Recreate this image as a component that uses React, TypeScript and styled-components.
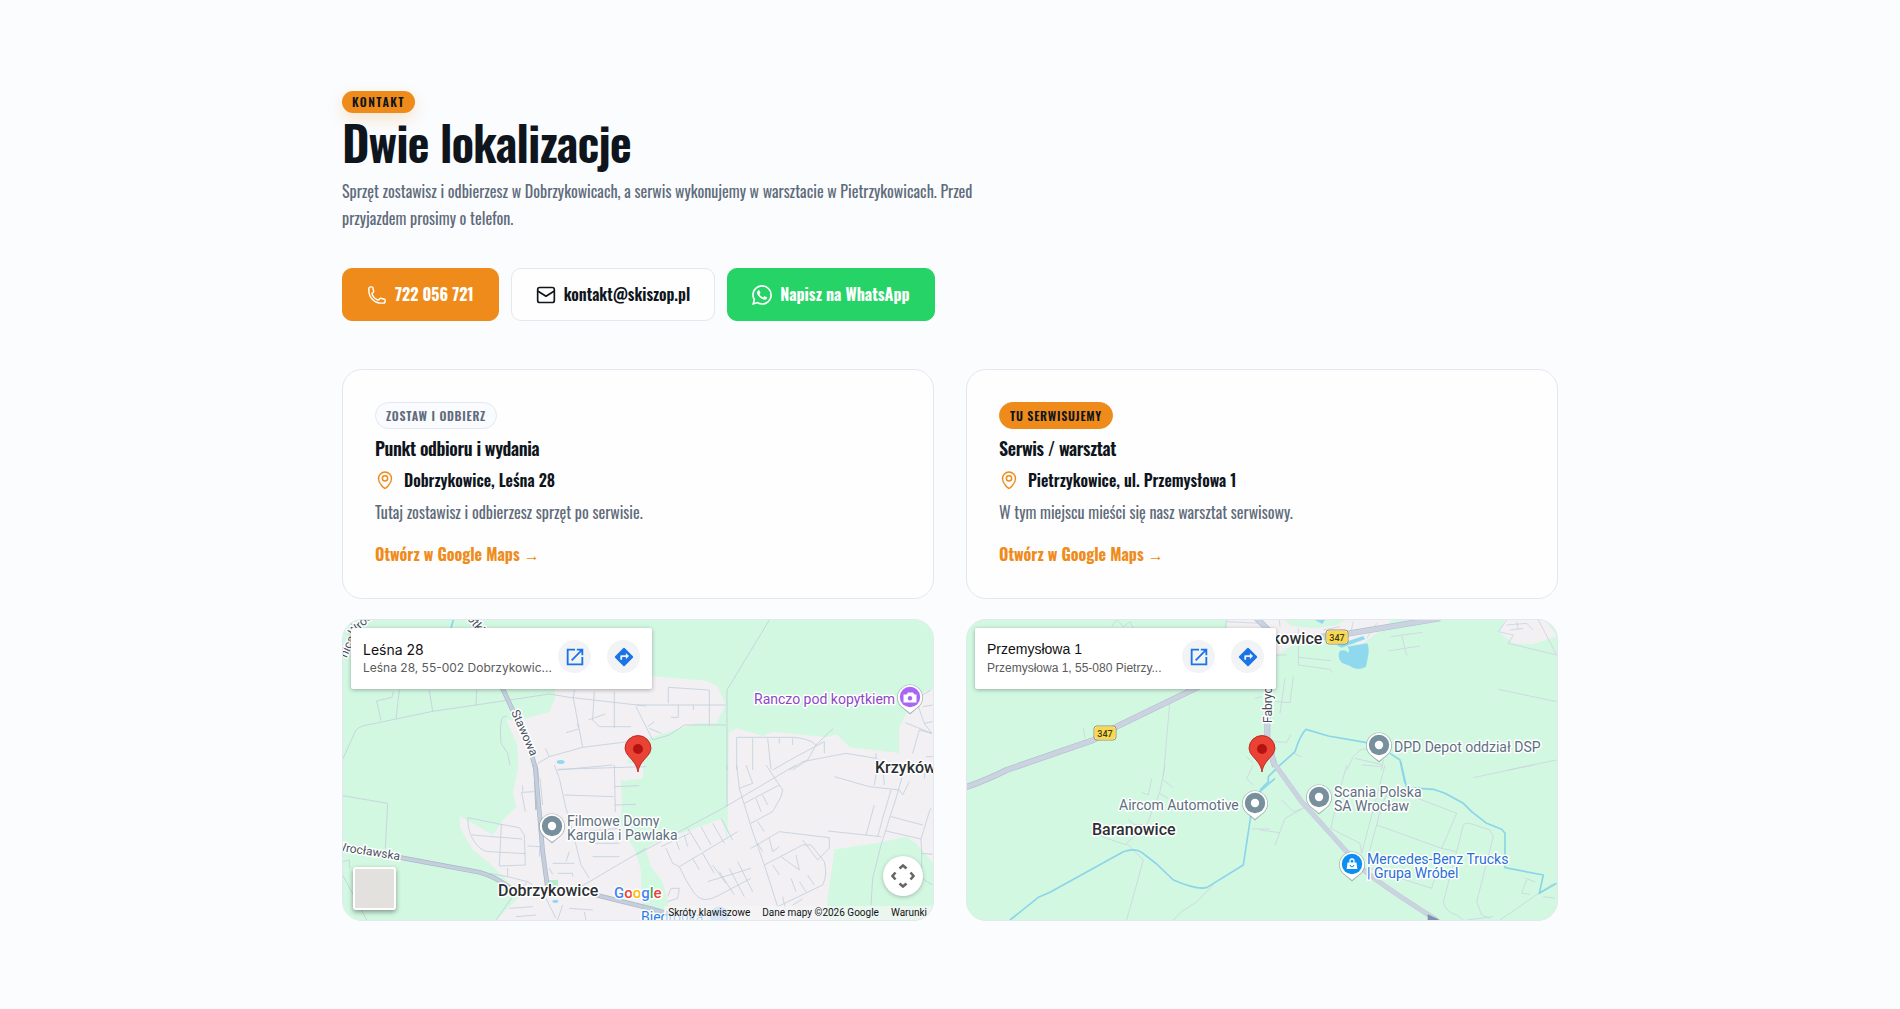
import React from "react";
import styled, { createGlobalStyle, css } from "styled-components";
import { SiWhatsapp } from "react-icons/si";

const colors = {
  page: "#fafcfe",
  ink: "#0f151c",
  muted: "#5f6b7a",
  line: "#e2e8ee",
  accent: "#ef8b1b",
  whatsapp: "#25d366",
};

const GlobalStyle = createGlobalStyle`
  *, *::before, *::after { box-sizing: border-box; }
  body {
    margin: 0;
    background: ${colors.page};
    color: ${colors.ink};
    font-family: Oswald, "Roboto Condensed", sans-serif;
    font-size: 16px;
  }
  h1, h2, p { margin: 0; }
  h1, h2 { font-weight: 600; letter-spacing: -0.02em; }
`;

/* ---------- page parts ---------- */

const Section = styled.section`
  max-width: 1280px;
  margin: 0 auto;
  padding: 91px 32px 88px;
`;

const Header = styled.header`
  display: flex;
  flex-direction: column;
  align-items: flex-start;
  max-width: 640px;
`;

const Eyebrow = styled.span`
  padding: 0 10px;
  border-radius: 11px;
  background: ${colors.accent};
  box-shadow: 0 6px 16px rgba(239, 139, 27, 0.22);
  font-size: 12px;
  font-weight: 600;
  line-height: 22px;
  letter-spacing: 0.12em;
  text-transform: uppercase;
`;

const Title = styled.h1`
  margin-top: 1px;
  font-size: 48px;
  line-height: 56px;
`;

const Lead = styled.p`
  margin-top: 8px;
  color: ${colors.muted};
  line-height: 27px;
`;

const Actions = styled.div`
  display: flex;
  flex-wrap: wrap;
  gap: 12px;
  margin-top: 36px;
`;

const variants = {
  primary: css`
    background: ${colors.accent};
    border-color: ${colors.accent};
    color: #fff;
    font-weight: 700;
  `,
  plain: css`
    background: #fefefe;
    border-color: ${colors.line};
    color: ${colors.ink};
    font-weight: 600;
  `,
  whatsapp: css`
    background: ${colors.whatsapp};
    border-color: ${colors.whatsapp};
    color: #fff;
    font-weight: 700;
  `,
};

const ActionLink = styled.a<{ $variant: keyof typeof variants }>`
  display: inline-flex;
  align-items: center;
  gap: 8px;
  padding: 13px 24px;
  border: 1px solid;
  border-radius: 10px;
  line-height: 25px;
  text-decoration: none;
  ${(p) => variants[p.$variant]}

  svg { flex: none; width: 20px; height: 20px; }
`;

const Columns = styled.div`
  display: grid;
  grid-template-columns: repeat(auto-fit, minmax(360px, 1fr));
  gap: 32px;
  margin-top: 48px;
`;

const Place = styled.article`
  display: flex;
  flex-direction: column;
  gap: 20px;
  min-width: 0;
`;

const Card = styled.div`
  display: flex;
  flex-direction: column;
  align-items: flex-start;
  padding: 32px;
  border: 1px solid ${colors.line};
  border-radius: 20px;
  background: #fefefe;
`;

const Tag = styled.span<{ $filled?: boolean }>`
  padding: 0 10px;
  border: 1px solid ${(p) => (p.$filled ? colors.accent : colors.line)};
  border-radius: 14px;
  background: ${(p) => (p.$filled ? colors.accent : "#f9fbfe")};
  color: ${(p) => (p.$filled ? colors.ink : colors.muted)};
  font-size: 12px;
  font-weight: 600;
  line-height: 25px;
  letter-spacing: 0.06em;
  text-transform: uppercase;
`;

const CardTitle = styled.h2`
  margin-top: 6px;
  font-size: 18px;
  line-height: 26px;
`;

const Address = styled.p`
  display: flex;
  align-items: center;
  gap: 9px;
  margin-top: 6px;
  font-weight: 600;
  line-height: 26px;

  svg { width: 20px; height: 20px; color: ${colors.accent}; }
`;

const Note = styled.p`
  margin-top: 6px;
  color: ${colors.muted};
  line-height: 27px;
`;

const MapsLink = styled.a`
  margin-top: 16px;
  color: ${colors.accent};
  font-weight: 700;
  line-height: 24px;
  text-decoration: none;
`;

/* ---------- map parts ---------- */

const MapFrame = styled.div`
  position: relative;
  height: 302px;
  border: 1px solid ${colors.line};
  border-radius: 20px;
  overflow: hidden;
  background: #d3f8e2;
  font-family: Roboto, "Liberation Sans", sans-serif;
`;

const MapCanvas = styled.svg`
  display: block;
  width: 100%;
  height: 100%;

  .road { fill: none; stroke: #c3cfdd; stroke-width: 2.5; }
  .street { fill: none; stroke: #ccd4e0; stroke-width: 2.5; }
  .casing { fill: none; stroke: #a9b6c8; stroke-width: 14; }
  .highway { fill: none; stroke: #c5cedc; stroke-width: 10; }
  .wideCasing { fill: none; stroke: #b4bed0; stroke-width: 18; }
  .wide { fill: none; stroke: #cbd3e0; stroke-width: 14; }
  .river { fill: none; stroke: #8bd5e9; stroke-width: 5; stroke-linejoin: round; }
  .water { fill: #8fd8ee; }
  .land { fill: #f2f0f2; }
  .green { fill: #d3f8e2; }
`;

const MapText = styled.text<{ $size?: number; $weight?: number }>`
  fill: ${(p) => p.fill ?? "#5d7080"};
  font-size: ${(p) => p.$size ?? 14}px;
  font-weight: ${(p) => p.$weight ?? 400};
  paint-order: stroke;
  stroke: #fff;
  stroke-width: 3px;
  stroke-linejoin: round;
`;

const InfoBox = styled.div`
  position: absolute;
  top: 8px;
  left: 8px;
  display: flex;
  align-items: flex-start;
  gap: 16px;
  width: 301px;
  height: 61px;
  padding: 12px 12px 0;
  border-radius: 2px;
  background: #fff;
  box-shadow: 0 1px 4px rgba(0, 0, 0, 0.3);
`;

const InfoText = styled.div<{ $arial?: boolean }>`
  flex: 1;
  min-width: 0;
  font-family: ${(p) => (p.$arial ? '"Liberation Sans", sans-serif' : 'Inter, Roboto, sans-serif')};
`;

const InfoName = styled.div`
  color: #111;
  font-size: 14px;
  line-height: 19px;
`;

const InfoAddress = styled.div`
  color: #5b5b5b;
  font-size: 12px;
  line-height: 18px;
  white-space: nowrap;
`;

const RoundLink = styled.a`
  display: grid;
  flex: none;
  place-items: center;
  width: 33px;
  height: 33px;
  border-radius: 50%;
  background: #f1f3f4;

  svg { width: 22px; height: 22px; }
`;

const LayerButton = styled.button`
  position: absolute;
  left: 10px;
  bottom: 10px;
  width: 43px;
  height: 43px;
  padding: 0;
  border: 2px solid #fff;
  border-radius: 3px;
  background: #e3e1de;
  box-shadow: 0 2px 5px rgba(0, 0, 0, 0.4);
`;

const CameraButton = styled.button`
  position: absolute;
  right: 10px;
  bottom: 24px;
  display: grid;
  place-items: center;
  width: 40px;
  height: 40px;
  padding: 0;
  border: 0;
  border-radius: 50%;
  background: #fff;
  box-shadow: 0 1px 4px rgba(0, 0, 0, 0.25);
`;

const Legal = styled.div`
  position: absolute;
  right: 0;
  bottom: 0;
  display: flex;
  gap: 12px;
  padding: 0 6px 0 4px;
  background: rgba(245, 245, 245, 0.7);
  font-size: 10px;
  line-height: 14px;

  a, button {
    padding: 0;
    border: 0;
    background: none;
    color: #111;
    font: inherit;
    text-decoration: none;
  }
`;

/* ---------- icons ---------- */

const lineIcon = {
  viewBox: "0 0 24 24",
  fill: "none",
  stroke: "currentColor",
  strokeLinecap: "round",
  strokeLinejoin: "round",
  "aria-hidden": true,
} as const;

const PhoneIcon = () => (
  <svg {...lineIcon} strokeWidth={1.7}>
    <path d="M2.25 6.75c0 8.284 6.716 15 15 15h2.25a2.25 2.25 0 0 0 2.25-2.25v-1.372c0-.516-.351-.966-.852-1.091l-4.423-1.106c-.44-.11-.902.055-1.173.417l-.97 1.293c-.282.376-.769.542-1.21.38a12.035 12.035 0 0 1-7.143-7.143c-.162-.441.004-.928.38-1.21l1.293-.97c.363-.271.527-.734.417-1.173L6.963 3.102a1.125 1.125 0 0 0-1.091-.852H4.5A2.25 2.25 0 0 0 2.25 4.5v2.25Z" />
  </svg>
);

const MailIcon = () => (
  <svg {...lineIcon} strokeWidth={2}>
    <rect x="2" y="3" width="20" height="18" rx="2.5" />
    <path d="m2.5 7.5 9.5 6 9.5-6" />
  </svg>
);

const PinIcon = () => (
  <svg {...lineIcon} strokeWidth={1.8}>
    <circle cx="12" cy="10" r="3.2" />
    <path d="M19.8 10.2C19.8 17 12 22.2 12 22.2S4.2 17 4.2 10.2a7.8 7.8 0 0 1 15.6 0Z" />
  </svg>
);

const OpenIcon = () => (
  <svg viewBox="0 0 24 24" fill="#1a73e8" aria-hidden>
    <path d="M19 19H5V5h7V3H3v18h18v-9h-2v7zM14 3v2h3.6l-9.9 9.9 1.4 1.4L19 6.400V10h2V3h-7z" />
  </svg>
);

const DirectionsIcon = () => (
  <svg viewBox="0 0 24 24" fill="#1a73e8" aria-hidden>
    <path d="M21.700 11.300l-9-9a1 1 0 0 0-1.400 0l-9 9a1 1 0 0 0 0 1.400l9 9a1 1 0 0 0 1.400 0l9-9a1 1 0 0 0 0-1.400zM14 14.500V12h-4v3H8v-4a1 1 0 0 1 1-1h5V7.500l3.500 3.500-3.500 3.500z" />
  </svg>
);

const CameraIcon = () => (
  <svg width="24" height="24" viewBox="0 0 24 24" fill="none" stroke="#666" strokeWidth="2.600" aria-hidden>
    <path d="M8.500 4.500 12 1.500l3.500 3M8.500 19.500l3.500 3 3.500-3M4.500 8.500l-3 3.500 3 3.500M19.500 8.500l3 3.500-3 3.500" />
  </svg>
);

const RedPin = ({ x, y }: { x: number; y: number }) => (
  <g transform={`translate(${x} ${y})`}>
    <path
      d="M0 0C-1-7-5-11-9-15.500A13 13 0 0 1-13-23.500 13 13 0 0 1 13-23.500 13 13 0 0 1 9-15.500C5-11 1-7 0 0Z"
      fill="#ea4335"
      stroke="#b31412"
      strokeWidth="0.800"
    />
    <circle cy="-23" r="5" fill="#b31412" />
  </g>
);

const PoiPin = ({ x, y, color = "#78909c", children }: { x: number; y: number; color?: string; children?: React.ReactNode }) => (
  <g transform={`translate(${x} ${y})`}>
    <path d="M0 17.500-7 11.500a13 13 0 1 1 14 0Z" fill="#5b6670" opacity="0.450" />
    <path d="M0 16-7 10.500a12.300 12.300 0 1 1 14 0Z" fill="#fff" />
    <circle r="10.200" fill={color} />
    {children ?? <circle r="4.200" fill="#fff" />}
  </g>
);

const RoadShield = ({ x, y }: { x: number; y: number }) => (
  <g transform={`translate(${x} ${y})`}>
    <rect x="-11" y="-7" width="22" height="14" rx="3" fill="#fff" stroke="#8b7a2b" strokeWidth="0.800" />
    <rect x="-10" y="-6" width="20" height="12" rx="2" fill="#fbd84a" />
    <text y="3.500" textAnchor="middle" fontSize="9" fontWeight="500" fill="#3c3a20">347</text>
  </g>
);

/* ---------- map drawings, one group per tile ---------- */

const TL = "translate(-21 -30)";
const TR = "translate(879 -30)";
const BL = "translate(-21 435)";
const BR = "translate(879 435)";

const DobrzykowiceMap = () => (
  <MapCanvas viewBox="0 0 590 300" preserveAspectRatio="xMidYMid slice" role="img" aria-label="Mapa: Leśna 28, Dobrzykowice">
    <g transform="scale(0.33333)">
      <rect className="land" width="1770" height="900" />
      <path className="green" d="M0 0H1770V208L1745 215 1690 280 1668 325V399L1520 382 1480 343 1450 352 1290 335 1260 348 1180 325 1158 340 1153 660 1135 590 1000 645 905 680 925 740 960 790 975 850 960 900H895V760L880 700 833 610 840 500 860 385 905 360 930 350 1060 310 1120 310 1148 255 1125 200 1090 182 920 168H640L635 235 620 275 545 296 490 300 522 372 526 440 510 520 520 560 480 600 450 645 350 588 352 625 390 690 440 730 490 780 525 815 530 830 460 900H0Z" />
      <path className="green" d="M833 480 905 468 1153 450V590L1000 645 930 672 905 690 870 650 840 600Z" />
      <path className="land" d="M820 430h80v45l-60 8-30-20Z" />
      <path className="green" d="M1475 688 1600 670 1690 650 1720 670 1770 730V900H1447L1460 790Z" />
      <path d="M610 780h35v18l-28 14Z" fill="#b7ead0" />
      <g transform={TL}>
        <path className="road" d="M20 448 60 360Q75 345 110 342L180 327 290 304 420 285 640 252 700 262 930 288M180 327 190 240M290 304 280 240M420 285 422 240M135 332 122 273 168 262 172 245M500 322 512 318M500 322Q490 340 495 400L515 430 522 465M740 412 712 265 715 240M605 460 640 440 740 412 900 392M640 440 628 415M690 368 728 357M728 355 724 340M775 245 770 330 790 350 885 350M835 355V245M757 330 808 312M665 478 930 470" />
        <path className="river" d="M345 54 352 30M40 40l20 8" />
        <path className="casing" d="M497 230 530 300 580 410 600 480 605 600" />
        <path className="highway" d="M497 230 530 300 580 410 600 480 605 600" />
        <ellipse className="water" cx="674" cy="456" rx="12" ry="6" />
      </g>
      <g transform={TR}>
        <path className="road" d="M400 30 273 240V480M0 285H270M97 280V232L218 240M220 345V240M127 285V322H105M172 300V285M0 290 50 390 100 375 145 345H270M40 355 75 370M35 350 55 335M302 480V382H470Q520 385 540 405L592 355M350 480V385M395 385 405 478M430 400V385M470 385V405M540 405 515 450 470 480M410 480 480 440 565 395V430M460 480 500 455 630 430 720 445 780 480M720 445V430M808 338 887 370 865 340 840 270M887 370 850 360 830 430M860 290 890 285M865 340 890 335M860 255 885 240M870 440h20" />
      </g>
      <g transform={BL}>
        <path className="road" d="M20 92 155 115 148 250M665 15 830 0M685 90 833 95M595 80 557 82 568 140M560 80V62M655 0 670 40 690 130 710 200 735 300 760 340M20 330 95 470M20 290 40 285V310M395 158 495 178 550 188 565 210 568 300 490 303 496 178M395 158Q395 200 415 230T460 260L570 266M408 210 558 222M515 310V335L575 350 590 360M460 325 515 335M575 350 530 395 480 465M575 243 612 245 610 275M760 235H850M770 275H850M700 260 690 290M735 365 930 250M735 200 850 190M650 295h65M665 325h45v10M835 65 910 62M835 120 900 118M835 0 838 140M612 40 620 120M640 310l10 18M665 465 680 420M630 400 660 460M745 440 750 465M700 430 770 435M520 430 590 425M540 455 600 450" />
        <path className="casing" d="M178 275 430 322 Q480 335 530 375M780 390 940 430 1020 452" />
        <path className="highway" d="M178 275 430 322 Q480 335 530 375M780 390 940 430 1020 452" />
        <path className="casing" d="M597 0 610 140 620 260 635 370" />
        <path className="highway" d="M597 0 610 140 620 260 635 370" />
        <ellipse className="water" cx="658" cy="409" rx="9" ry="5" />
      </g>
      <g transform={BR}>
        <path className="road" d="M0 270 260 130 480 0M302 0 310 70 350 200 385 300 425 425M273 0V125M310 70 350 55 330 0M390 0 440 75 435 95 410 140 345 175M325 115 430 60M360 100 375 140M380 90 395 120M365 170 385 200M75 245 160 205M90 250 110 295 130 305 305 200M130 305 Q150 350 175 385T250 390L345 340M120 225 130 255M145 210 155 245M155 190 195 255M195 185 225 240M230 175 265 235M255 160 290 225M170 280 190 315M200 265 235 325M230 300 270 355M250 320 295 390M280 310 325 395M305 290 350 380M215 350 345 310M345 250 430 200 580 218V250L545 285 500 225M365 235 380 260M400 220 410 260 430 245M385 300 500 240 525 240 565 290Q575 330 560 360L425 425M410 300 430 330M435 275 490 315 480 270M465 340 480 380M490 350 510 380M515 330 535 360M595 35 700 65 790 75M575 198 735 215M800 30 780 100 735 240 710 340 705 420M790 75 800 90 820 50M715 60 725 0M765 75 740 160 725 215M765 155 860 180M750 198 855 222 857 265 890 268M855 222 880 140 885 130M857 265V340L890 360M690 210 715 120M740 0 745 60M95 395 105 370 130 370 125 400 95 410M870 0 865 40M450 440 440 395M470 420l30-18" />
        <circle cx="250" cy="452" r="28" fill="#8ec9fb" />
      </g>
    </g>

    <MapText $size={12} transform="translate(8 28) rotate(-66)" textAnchor="middle" fill="#46515e">nica</MapText>
    <MapText $size={12} transform="translate(10 17) rotate(-45)" fill="#46515e">Wrocł</MapText>
    <MapText $size={12} transform="translate(119 -7) rotate(50)" fill="#46515e">Kotki</MapText>
    <MapText $size={12} transform="translate(168 92) rotate(66)" fill="#46515e">Stawowa</MapText>
    <MapText $size={12} transform="translate(-8 230) rotate(9)" fill="#46515e">Wrocławska</MapText>
    <MapText x="411" y="84" fill="#8e47c7">Ranczo pod kopytkiem</MapText>
    <MapText x="532" y="153" $size={16} $weight={500} fill="#2b2f33">Krzyków</MapText>
    <MapText x="224" y="206">Filmowe Domy</MapText>
    <MapText x="224" y="220">Kargula i Pawlaka</MapText>
    <MapText x="155" y="276" $size={16} $weight={500} fill="#2b2f33">Dobrzykowice</MapText>
    <MapText x="298" y="302" fill="#2a7de1">Biedronka</MapText>
    <MapText x="271" y="278" $size={15} $weight={500}>
      <tspan fill="#4285f4">G</tspan><tspan fill="#ea4335">o</tspan><tspan fill="#fbbc04">o</tspan><tspan fill="#4285f4">g</tspan><tspan fill="#34a853">l</tspan><tspan fill="#ea4335">e</tspan>
    </MapText>
    <PoiPin x={567} y={77} color="#a966f5">
      <path d="M-6.500-2.500h3l1.500-2H3l1.500 2h2v8h-13Z" fill="#fff" />
      <circle cy="1.200" r="2.200" fill="#a966f5" />
    </PoiPin>
    <PoiPin x={209} y={206} />
    <RedPin x={295} y={152} />
  </MapCanvas>
);

const PietrzykowiceMap = () => (
  <MapCanvas viewBox="0 0 590 300" preserveAspectRatio="xMidYMid slice" role="img" aria-label="Mapa: Przemysłowa 1, Pietrzykowice">
    <g transform="scale(0.33333)">
      <rect className="green" width="1770" height="900" />
      <path className="land" d="M780 0H1275L1235 35 1180 75 1120 55 1000 60 920 110H790Z" />
      <path className="green" d="M950 0H1135L1110 15 1040 25 975 18Z" />
      <path className="land" d="M1612 0H1735L1770 48 1700 72 1640 70 1598 38Z" />
      <g transform={TR}>
        <path className="water" d="M165 30h30l-8 12zM230 105 310 78 315 88 285 98 245 113ZM262 110 322 100Q330 120 322 150L318 170Q290 185 270 168L245 158Q230 140 240 122Q255 118 265 128Q270 120 262 110Z" />
        <path className="street" d="M392 80 488 67M385 123 480 108M425 75 440 137M58 30 60 50M115 55V165L210 178 218 188M115 142 213 152M45 135H80M100 200 90 278 45 275M75 205 60 310M20 380 45 395 80 397 92 375M715 238 890 275M835 30 890 135M740 30 715 65 760 75 745 100 890 135M740 45 800 40 820 60M750 60 790 55M770 35 775 60M745 480 890 450M280 440 300 420 350 410M285 445 370 465M280 440 260 480M370 450 365 480M100 430 125 440M270 75 280 35M320 85 350 40M190 60 240 50" />
        <path className="wideCasing" d="M150 85 270 70 540 25" />
        <path className="wide" d="M150 85 270 70 540 25" />
        <path className="river" d="M0 540 25 515V500L55 470 105 425Q120 375 138 358L205 378 320 398M390 430 420 450 435 520" />
      </g>
      <g transform={TL}>
        <path className="street" d="M455 50 470 30 490 50 510 35 520 54M800 30 795 55M800 35 900 40M630 270 610 500M370 355 375 385M860 440 880 460M885 265 905 260" />
        <path className="wideCasing" d="M-10 540Q60 520 140 480L400 390 470 350 700 238 800 190" />
        <path className="wide" d="M-10 540Q60 520 140 480L400 390 470 350 700 238 800 190" />
        <path className="wideCasing" d="M885 20 925 60M922 230V390L945 470" />
        <path className="wide" d="M885 20 925 60M922 230V390L945 470" />
      </g>
      <g transform={BL}>
        <path className="street" d="M615 0 600 80 560 180 500 235 550 285 500 465M610 45 640 68M598 85 625 100M575 40 565 90 545 82M560 180 520 178 505 162M390 200 440 220 500 240M640 465 665 440 710 410 760 360M880 0 860 40 880 60M875 192H930" />
        <path className="river" d="M150 465 235 397 270 382 490 260Q525 248 545 262L590 297 640 345Q710 375 740 368L850 300 872 155 900 80 945 40" />
      </g>
      <g transform={BR}>
        <path className="street" d="M260 0 240 75 212 190 300 235 305 265 375 0M305 0 365 5M65 105 100 140 130 130 75 160 45 240M0 195 60 203M350 180 545 250 590 145 460 95M350 180 365 120 390 70M350 180 325 270M590 260 610 180Q615 172 630 175L690 195 700 215 650 410 665 450 690 460M590 260 545 250M590 260 550 410Q555 440 590 450L610 465M330 310 515 370 530 320M640 38 820 0M720 465 880 355M795 340 825 350M800 345 785 385 810 388M850 395 885 400M620 465 700 455" />
        <path className="casing" d="M35-15 125 110 215 210 300 305 Q340 345 530 465" />
        <path className="wide" d="M35-15 125 110 215 210 300 305 Q340 345 530 465" />
        <path d="M503 448 540 465H503Z" fill="#7f92ad" />
        <path className="river" d="M422-10 440 68 520 73 555 85 610 115 635 140 680 175 725 193 735 205V308L850 330 838 385 890 355" />
      </g>
    </g>

    <MapText x="305" y="24" $size={16} $weight={500} fill="#2b2f33">kowice</MapText>
    <RoadShield x={370} y={17} />
    <RoadShield x={138} y={113} />
    <MapText $size={12} transform="translate(305 103) rotate(-90)" fill="#46515e">Fabryczna</MapText>
    <MapText x="427" y="132">DPD Depot oddział DSP</MapText>
    <MapText x="152" y="190">Aircom Automotive</MapText>
    <MapText x="367" y="177">Scania Polska</MapText>
    <MapText x="367" y="191">SA Wrocław</MapText>
    <MapText x="125" y="215" $size={16} $weight={500} fill="#2b2f33">Baranowice</MapText>
    <MapText x="400" y="244" fill="#2a6fd6">Mercedes-Benz Trucks</MapText>
    <MapText x="400" y="258" fill="#2a6fd6">| Grupa Wróbel</MapText>
    <PoiPin x={412} y={125} />
    <PoiPin x={288} y={183} />
    <PoiPin x={352} y={177} />
    <PoiPin x={385} y={244} color="#0d8ff2">
      <path d="M-4.500-1.500h9l.8 6.500H-5.300Z" fill="#fff" />
      <path d="M-2-1v-2a2 2 0 0 1 4 0v2" fill="none" stroke="#fff" strokeWidth="1.300" />
      <path d="M-1.800 1a1.800 1.800 0 0 0 3.600 0" fill="none" stroke="#0d8ff2" />
    </PoiPin>
    <RedPin x={295} y={152} />
  </MapCanvas>
);

/* ---------- content ---------- */

type PlaceData = {
  tag: string;
  filled?: boolean;
  title: string;
  address: string;
  note: string;
  mapName: string;
  mapAddress: string;
  controls?: boolean;
  Drawing: () => React.ReactElement;
};

const places: PlaceData[] = [
  {
    tag: "Zostaw i odbierz",
    title: "Punkt odbioru i wydania",
    address: "Dobrzykowice, Leśna 28",
    note: "Tutaj zostawisz i odbierzesz sprzęt po serwisie.",
    mapName: "Leśna 28",
    mapAddress: "Leśna 28, 55-002 Dobrzykowic...",
    controls: true,
    Drawing: DobrzykowiceMap,
  },
  {
    tag: "Tu serwisujemy",
    filled: true,
    title: "Serwis / warsztat",
    address: "Pietrzykowice, ul. Przemysłowa 1",
    note: "W tym miejscu mieści się nasz warsztat serwisowy.",
    mapName: "Przemysłowa 1",
    mapAddress: "Przemysłowa 1, 55-080 Pietrzy...",
    Drawing: PietrzykowiceMap,
  },
];

export default function App() {
  return (
    <>
      <GlobalStyle />
      <Section>
        <Header>
          <Eyebrow>Kontakt</Eyebrow>
          <Title>Dwie lokalizacje</Title>
          <Lead>
            Sprzęt zostawisz i odbierzesz w Dobrzykowicach, a serwis wykonujemy w warsztacie w Pietrzykowicach. Przed
            przyjazdem prosimy o telefon.
          </Lead>
        </Header>
        <Actions>
          <ActionLink $variant="primary" href="tel:722056721"><PhoneIcon />722 056 721</ActionLink>
          <ActionLink $variant="plain" href="mailto:kontakt@skiszop.pl"><MailIcon />kontakt@skiszop.pl</ActionLink>
          <ActionLink $variant="whatsapp" href="#whatsapp"><SiWhatsapp />Napisz na WhatsApp</ActionLink>
        </Actions>
        <Columns>
          {places.map(({ Drawing, ...place }) => (
            <Place key={place.title}>
              <Card>
                <Tag $filled={place.filled}>{place.tag}</Tag>
                <CardTitle>{place.title}</CardTitle>
                <Address><PinIcon />{place.address}</Address>
                <Note>{place.note}</Note>
                <MapsLink href="#maps">Otwórz w Google Maps →</MapsLink>
              </Card>
              <MapFrame>
                <Drawing />
                <InfoBox>
                  <InfoText $arial={!place.controls}>
                    <InfoName>{place.mapName}</InfoName>
                    <InfoAddress>{place.mapAddress}</InfoAddress>
                  </InfoText>
                  <RoundLink href="#maps" aria-label="Otwórz w Mapach"><OpenIcon /></RoundLink>
                  <RoundLink href="#directions" aria-label="Wskazówki dojazdu"><DirectionsIcon /></RoundLink>
                </InfoBox>
                {place.controls && (
                  <>
                    <LayerButton type="button" aria-label="Warstwy mapy" />
                    <CameraButton type="button" aria-label="Sterowanie kamerą"><CameraIcon /></CameraButton>
                    <Legal>
                      <button type="button">Skróty klawiszowe</button>
                      <span>Dane mapy ©2026 Google</span>
                      <a href="#terms">Warunki</a>
                    </Legal>
                  </>
                )}
              </MapFrame>
            </Place>
          ))}
        </Columns>
      </Section>
    </>
  );
}
